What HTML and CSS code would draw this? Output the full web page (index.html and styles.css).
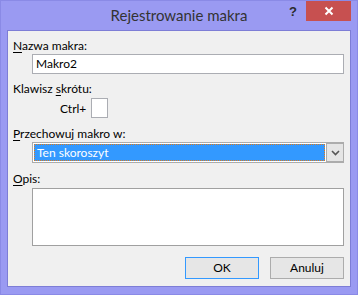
FILE: index.html
```html
<!DOCTYPE html>
<html lang="pl">
<head>
<meta charset="utf-8">
<title>Rejestrowanie makra</title>
<link rel="stylesheet" href="styles.css">
</head>
<body>
<div class="window">
  <div class="titlebar">
    <div class="tb-spacer"></div>
    <div class="title">Rejestrowanie makra</div>
    <div class="tb-controls">
      <div class="help">?</div>
      <div class="close">
        <svg width="10" height="10" viewBox="0 0 10 10"><path d="M1.5 1.5 L8.5 8.5 M8.5 1.5 L1.5 8.5" stroke="#fff" stroke-width="2" fill="none"/></svg>
      </div>
    </div>
  </div>
  <div class="client">
    <div class="label lbl-first"><u>N</u>azwa makra:</div>
    <div class="field input">Makro2</div>
    <div class="label lbl-gap">Klawisz <u>s</u>krótu:</div>
    <div class="shortcut">
      <span class="ctrl">Ctrl+</span>
      <span class="keybox"></span>
    </div>
    <div class="label lbl-gap2"><u>P</u>rzechowuj makro w:</div>
    <div class="field select">
      <div class="sel-value"><span>Ten skoroszyt</span></div>
      <div class="sel-btn">
        <svg width="9" height="6" viewBox="0 0 9 6"><path d="M1 1 L4.5 4.5 L8 1" stroke="#555" stroke-width="1.6" fill="none"/></svg>
      </div>
    </div>
    <div class="label lbl-gap2"><u>O</u>pis:</div>
    <div class="field textarea"></div>
    <div class="buttons">
      <div class="btn btn-default">OK</div>
      <div class="btn">Anuluj</div>
    </div>
  </div>
</div>
</body>
</html>
```
FILE: styles.css
```css
html, body {
  margin: 0;
  padding: 0;
  background: #ffffff;
}
.window {
  width: 358px;
  height: 295px;
  box-sizing: border-box;
  background: #9a9af2;
  border: 1px solid #8a8ae6;
  padding: 0 6px 7px 6px;
  display: flex;
  flex-direction: column;
  font-family: "Lato", "Liberation Sans", sans-serif;
}
.titlebar {
  height: 29px;
  flex: none;
  display: grid;
  grid-template-columns: 1fr auto 1fr;
  margin: 0 -6px;
}
.title {
  font-size: 15px;
  line-height: 28px;
  color: #333333;
  white-space: nowrap;
}
.tb-controls {
  display: flex;
  justify-content: flex-end;
  align-items: flex-start;
  padding-right: 6px;
}
.help {
  width: 26px;
  text-align: center;
  font-family: "Liberation Sans", sans-serif;
  font-weight: bold;
  font-size: 13px;
  line-height: 22px;
  color: #2b2b2b;
}
.close {
  width: 45px;
  height: 20px;
  background: #c75050;
  display: flex;
  align-items: center;
  justify-content: center;
}
.client {
  flex: 1;
  background: #f0f0f0;
  border: 1px solid #7d7dd6;
  display: flex;
  flex-direction: column;
  padding: 0 6px 0 5px;
  font-size: 12px;
  color: #000000;
}
.label {
  line-height: 15px;
  white-space: nowrap;
}
.lbl-first { margin-top: 7px; }
.lbl-gap { margin-top: 7px; }
.lbl-gap2 { margin-top: 8px; }
.field {
  margin-left: 19px;
  box-sizing: border-box;
  border: 1px solid #abadb3;
  background: #ffffff;
}
.input {
  margin-top: 1px;
  height: 20px;
  line-height: 18px;
  padding-left: 3px;
}
.shortcut {
  margin-top: 2px;
  margin-left: 47px;
  display: flex;
  align-items: center;
  gap: 5px;
  height: 20px;
}
.keybox {
  width: 17px;
  height: 20px;
  box-sizing: border-box;
  border: 1px solid #abadb3;
  background: #ffffff;
}
.select {
  margin-top: 1px;
  height: 21px;
  display: flex;
  padding: 1px 0 1px 1px;
  border-color: #acacac;
}
.sel-value {
  flex: 1;
  background: #3399ff;
  border: 1px dotted #e07b1a;
  color: #ffffff;
  line-height: 15px;
  padding-left: 2px;
}
.sel-btn {
  width: 17px;
  margin-left: 1px;
  box-sizing: border-box;
  border: 1px solid #acacac;
  border-right: none;
  margin-top: -1px;
  margin-bottom: -1px;
  background: #e5e5e5;
  display: flex;
  align-items: center;
  justify-content: center;
}
.textarea {
  margin-top: 2px;
  height: 58px;
  border-color: #a0a0a0;
}
.buttons {
  margin-top: 11px;
  display: flex;
  justify-content: flex-end;
  gap: 11px;
  padding-right: 0;
}
.btn {
  width: 74px;
  height: 22px;
  box-sizing: border-box;
  border: 1px solid #acacac;
  background: #e6e6e6;
  text-align: center;
  line-height: 20px;
}
.btn-default {
  border-color: #3399ff;
}
u {
  text-decoration-thickness: 1px;
  text-underline-offset: 2px;
}
```
